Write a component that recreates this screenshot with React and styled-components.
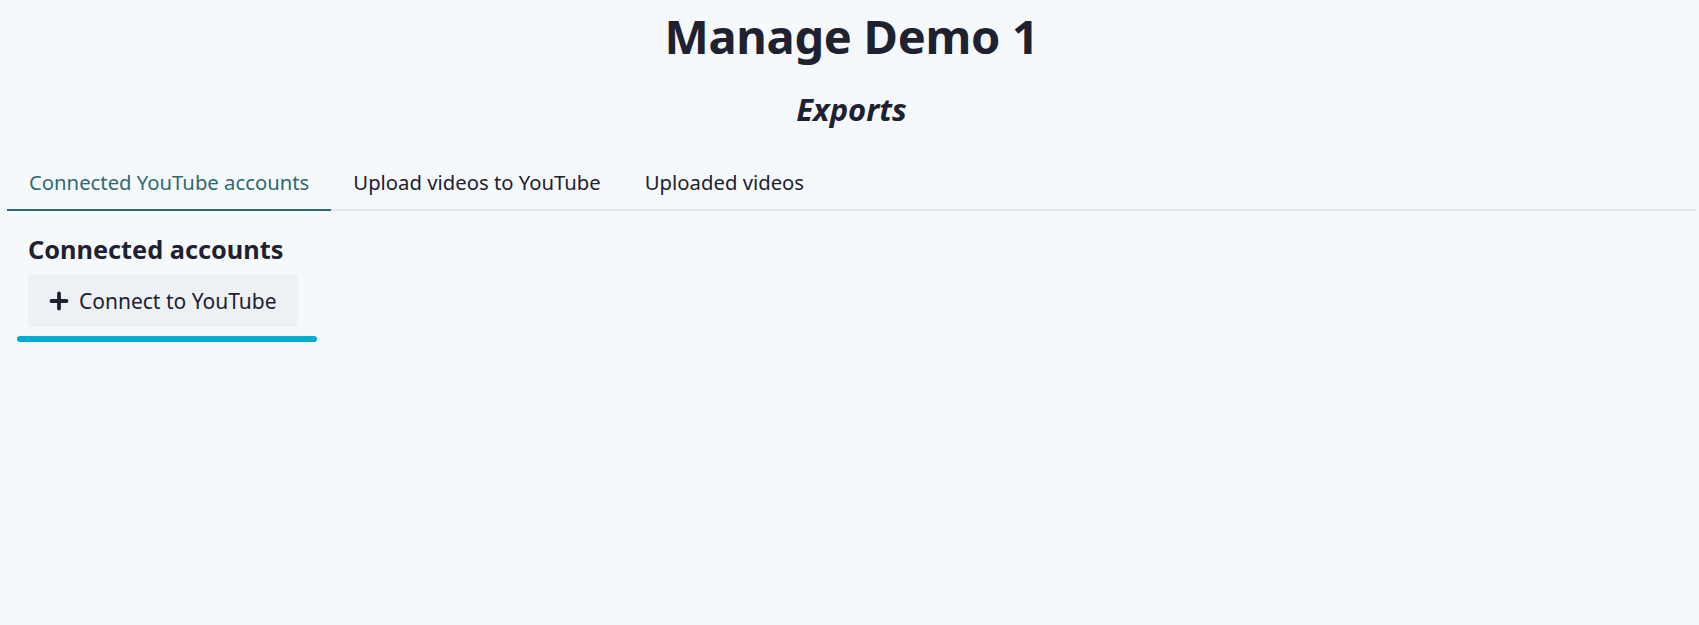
import React, { useState } from "react";
import styled, { createGlobalStyle } from "styled-components";

const GlobalStyle = createGlobalStyle`
  html, body {
    margin: 0;
    padding: 0;
    background: #f5f9fc;
  }
  body {
    font-family: "Noto Sans", "Open Sans", sans-serif;
    color: #1e2130;
  }
`;

const Page = styled.div`
  min-height: 625px;
  padding: 0 3px 0 7px;
  box-sizing: border-box;
`;

const Title = styled.h1`
  margin: 0;
  padding-top: 4px;
  text-align: center;
  font-size: 47px;
  line-height: 64px;
  font-weight: 700;
  letter-spacing: -0.3px;
`;

const Subtitle = styled.h2`
  margin: 21px 0 0;
  text-align: center;
  font-size: 31px;
  line-height: 40px;
  font-weight: 700;
  font-style: italic;
`;

const TabList = styled.div`
  display: flex;
  margin-top: 36px;
  border-bottom: 2px solid #e2e8ee;
`;

const Tab = styled.button`
  background: none;
  border: none;
  margin: 0 0 -2px;
  padding: 4px 22px 14px;
  font-family: inherit;
  font-size: 20.3px;
  line-height: 26px;
  font-weight: 400;
  cursor: pointer;
  color: ${(p) => (p.active ? "#2e6a72" : "#1e2130")};
  border-bottom: 2px solid ${(p) => (p.active ? "#2e6a72" : "transparent")};
`;

const Panel = styled.div`
  padding: 22px 0 0 10px;
`;

const Section = styled.div`
  padding-left: 11px;
`;

const Heading = styled.h3`
  margin: 0;
  font-size: 25.3px;
  line-height: 32px;
  font-weight: 700;
`;

const ConnectButton = styled.button`
  display: flex;
  align-items: center;
  gap: 10px;
  margin-top: 9px;
  height: 53px;
  width: 270px;
  padding: 0 0 0 21px;
  background: #edf1f5;
  border: none;
  border-radius: 3px;
  font-family: inherit;
  font-size: 21px;
  font-weight: 400;
  color: #1e2130;
  cursor: pointer;
`;

const Bar = styled.div`
  margin-top: 9px;
  width: 300px;
  height: 6px;
  border-radius: 3px;
  background: #00acd0;
`;

const PlusIcon = () => (
  <svg width="20" height="20" viewBox="0 0 20 20">
    <path
      d="M10 2.5v15M2.5 10h15"
      stroke="#1e2130"
      strokeWidth="3.8"
      strokeLinecap="round"
    />
  </svg>
);

const tabs = [
  "Connected YouTube accounts",
  "Upload videos to YouTube",
  "Uploaded videos",
];

export default function App() {
  const [active, setActive] = useState(0);
  return (
    <Page>
      <GlobalStyle />
      <Title>Manage Demo 1</Title>
      <Subtitle>Exports</Subtitle>
      <TabList>
        {tabs.map((t, i) => (
          <Tab key={t} active={i === active} onClick={() => setActive(i)}>
            {t}
          </Tab>
        ))}
      </TabList>
      <Panel>
        <Section>
          <Heading>Connected accounts</Heading>
          <ConnectButton>
            <PlusIcon />
            Connect to YouTube
          </ConnectButton>
        </Section>
        <Bar />
      </Panel>
    </Page>
  );
}
